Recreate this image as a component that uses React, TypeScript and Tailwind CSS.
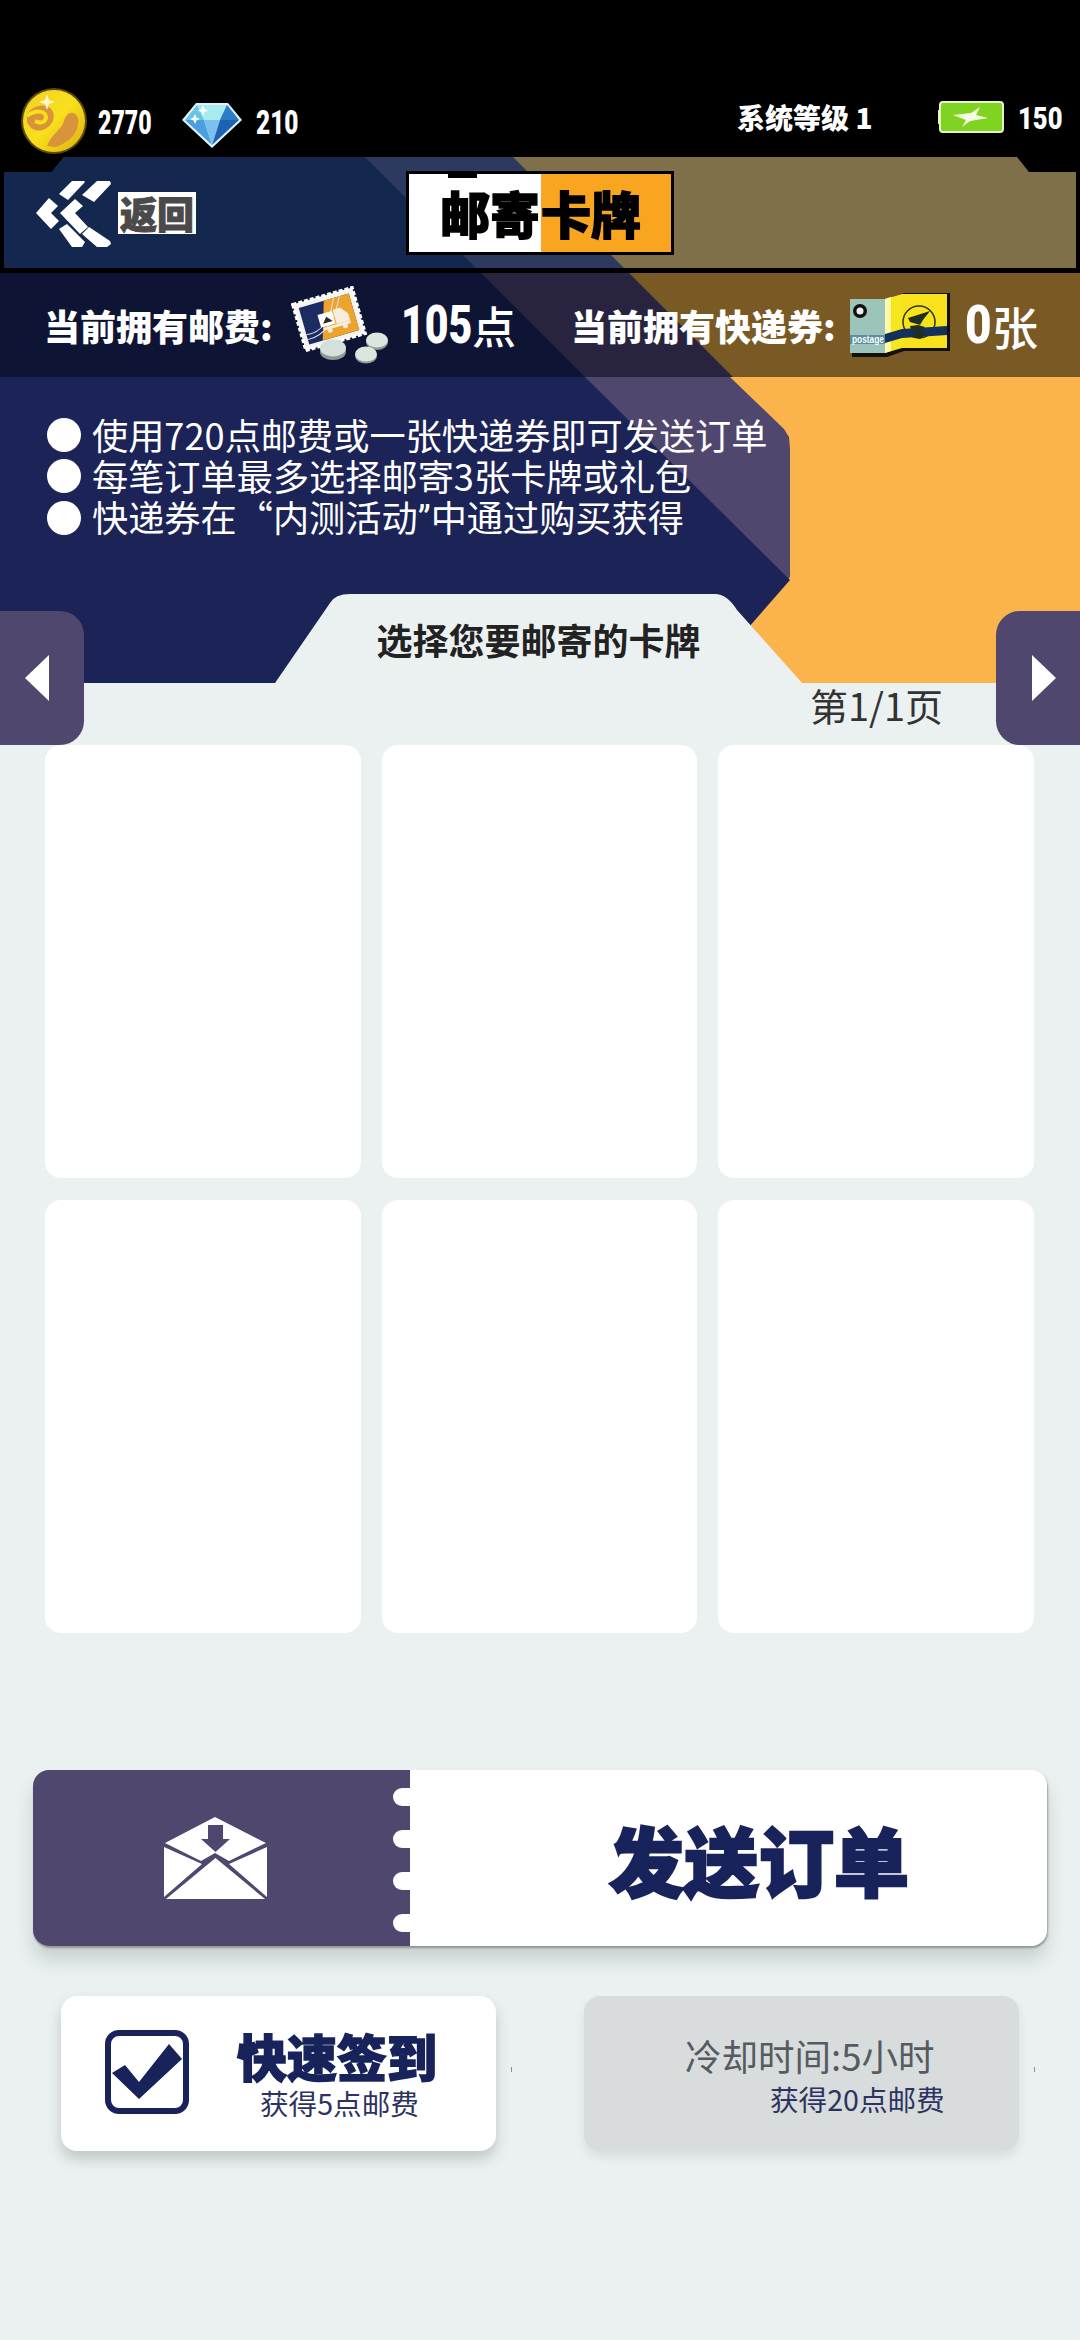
import type { ReactNode } from 'react'

const CARDS = [1, 2, 3, 4, 5, 6]

function Coin() {
  return (
    <svg viewBox="0 0 66 68" className="h-[68px] w-[66px] shrink-0">
      <defs>
        <linearGradient id="coinFill" x1="0" y1="0" x2="1" y2="1">
          <stop offset="0" stopColor="#f3cf28" />
          <stop offset="0.5" stopColor="#f8e01c" />
          <stop offset="1" stopColor="#dcae14" />
        </linearGradient>
      </defs>
      <circle cx="33" cy="34" r="33" fill="#5e4a10" />
      <circle cx="33" cy="34" r="31" fill="url(#coinFill)" />
      <path d="M6 27C13 17 26 16 31 23 35 30 32 38 24 42 16 46 9 42 6 35z" fill="#d9933a" />
      <path d="M6 29C14 23 24 23 25 30 25 35 20 37 14 34" fill="none" stroke="#f8e01c" strokeWidth="4" />
      <path d="M26 59C30 48 38 44 42 37 44 30 47 25 52 26 57 27 59 34 56 42 53 50 44 57 35 60z" fill="#d9933a" />
      <path d="M26 7l2 6 6 2-6 2-2 6-2-6-6-2 6-2z" fill="#fff8c8" />
    </svg>
  )
}

function Gem() {
  return (
    <svg viewBox="0 0 60 46" className="h-[46px] w-[60px] shrink-0">
      <path d="M14 1h32l14 17-30 28L0 18z" fill="#dff3fb" />
      <path d="M15 3h30l12 15H3z" fill="#66c6e8" />
      <path d="M15 3h30l-7 15H22z" fill="#a6ecee" />
      <path d="M3 18h19l8 25z" fill="#4b9fe0" />
      <path d="M22 18h16l-8 25z" fill="#7cc0ee" />
      <path d="M38 18h19L30 43z" fill="#1f62b4" />
      <path d="M45 3l12 15H38z" fill="#2d7cc6" />
      <path d="M21 3l1.500 4 4 1.500-4 1.500L21 14l-1.500-4-4-1.500 4-1.500zM13 12l1.500 3.500 3.500 1.500-3.500 1.500L13 22l-1.500-3.500L8 17l3.500-1.500z" fill="#ffffff" />
    </svg>
  )
}

function Battery() {
  return (
    <svg viewBox="0 0 66 32" className="h-[32px] w-[66px] shrink-0">
      <rect x="2" y="1" width="63" height="30" rx="3" fill="#7fd321" stroke="#e8f5c8" strokeWidth="2" />
      <rect x="0" y="9" width="3" height="14" fill="#e8f5c8" />
      <path d="M15 14L33 12 42 6 38 14 50 17 32 20 24 26 28 19z" fill="#f6fbe6" />
    </svg>
  )
}

function BackChevrons() {
  return (
    <svg viewBox="0 0 75 68" className="h-[68px] w-[75px] shrink-0" fill="#ffffff">
      <path d="M23 15L36 2H48L49 3 32 21z" />
      <path d="M46 16L61 2H74L75 5 58 23z" />
      <path d="M0 34L13 19 22 27 15 34 23 42 15 50z" />
      <path d="M24 34L39 20 47 27 39 34 52 48 44 55z" />
      <path d="M23 50L31 45 49 63 46 68H36z" />
      <path d="M46 55L53 48 74 62 75 65 71 68H61z" />
    </svg>
  )
}

function Stamp() {
  return (
    <svg viewBox="0 0 98 78" className="h-[78px] w-[98px] shrink-0">
      <g transform="rotate(-16 38 33)">
        <rect x="7" y="9" width="62" height="48" fill="#f4f4f0" stroke="#ffffff" strokeWidth="3" strokeDasharray="4 2" />
        <rect x="12" y="14" width="52" height="38" fill="#1c2c62" />
        <path d="M38 14h26v38H26z" fill="#eda32c" />
        <path d="M12 42c16 2 28-9 36-28M12 47c18 1 32-12 42-33" fill="none" stroke="#dbe4f4" strokeWidth="1" />
        <rect x="28" y="26" width="15" height="13" fill="#ffffff" />
        <path d="M31 36l5-6 5 6z" fill="#2a2a2a" />
        <path d="M44 25h8l6 8v7H44z" fill="#f7eedd" />
        <rect x="30" y="40" width="28" height="3" fill="#f7eedd" />
        <circle cx="36" cy="44" r="2.500" fill="#f7eedd" />
        <circle cx="52" cy="44" r="2.500" fill="#f7eedd" />
      </g>
      <ellipse cx="42" cy="66" rx="13" ry="8" fill="#8c9a92" />
      <ellipse cx="42" cy="62" rx="13" ry="8.500" fill="#d4e0da" />
      <ellipse cx="86" cy="56" rx="11" ry="8" fill="#8c9a92" />
      <ellipse cx="86" cy="54" rx="11" ry="7.500" fill="#dbe6e0" />
      <ellipse cx="75" cy="70" rx="11" ry="7.500" fill="#8c9a92" />
      <ellipse cx="75" cy="68" rx="11" ry="7.500" fill="#dbe6e0" />
    </svg>
  )
}

function Ticket() {
  return (
    <svg viewBox="0 0 102 66" className="h-[66px] w-[102px] shrink-0">
      <path d="M0 6h35L52 0h46v58H52L35 64H0z" fill="#111111" transform="translate(2 1)" />
      <path d="M0 7h35v54H0z" fill="#9cc4bb" />
      <path d="M35 7L52 2v54L35 61z" fill="#f5e61e" />
      <path d="M52 2h45v54H52z" fill="#f8e21c" />
      <path d="M35 7l6-2v54l-6 2z" fill="#fff9a8" />
      <circle cx="10" cy="19" r="7" fill="#101010" />
      <circle cx="10" cy="19" r="3.500" fill="#e8efe9" />
      <circle cx="69" cy="30" r="16" fill="none" stroke="#27331c" strokeWidth="1.500" />
      <path d="M35 42L52 37 97 34v9L52 46 35 51z" fill="#14305c" />
      <rect x="0" y="43" width="35" height="9" fill="#5a8f9b" />
      <path d="M58 26L80 19 73 28 70 33 60 30z" fill="#20301e" />
      <path d="M60 34l8-1 7 2-5 4 6 3-6 5-8-3 5-3-6-3z" fill="#20301e" />
      <text x="2" y="51" textLength="32" lengthAdjust="spacingAndGlyphs" fontFamily="'Liberation Sans', sans-serif" fontWeight="700" fontSize="11" fill="#ffffff">
        postage
      </text>
    </svg>
  )
}

function Envelope() {
  return (
    <svg viewBox="0 0 103 82" className="h-[82px] w-[103px]">
      <path d="M51 0L102 26 65 44 51 36 37 44 1 26z" fill="#ffffff" />
      <path d="M44 8h15v14h7L51.500 35 37 22h7z" fill="#50476f" />
      <path d="M0 30l38 17L0 80z" fill="#ffffff" />
      <path d="M103 30L65 47l38 33z" fill="#ffffff" />
      <path d="M51.500 41L101 82H2z" fill="#ffffff" />
    </svg>
  )
}

function CheckBox() {
  return (
    <svg viewBox="0 0 84 84" className="h-[84px] w-[84px] shrink-0">
      <rect x="3" y="3" width="78" height="78" rx="11" fill="none" stroke="#17235a" strokeWidth="6" />
      <path d="M7 43l13-8 14 17L64 14l13 15-43 40z" fill="#17235a" />
    </svg>
  )
}

function Num({ className, children }: { className: string; children: string }) {
  return (
    <span className={`inline-block origin-left font-['Roboto',sans-serif] font-black text-white ${className}`}>
      {children}
    </span>
  )
}

function Notice({ children }: { children: ReactNode }) {
  return (
    <div className="flex items-center">
      <span className="mr-[11px] h-[34px] w-[34px] shrink-0 rounded-full bg-white" />
      <span className="whitespace-pre">{children}</span>
    </div>
  )
}

export default function App() {
  return (
    <div className="relative flex h-[2340px] w-[1080px] flex-col overflow-hidden bg-[#ebf1f1] font-['Noto_Sans_CJK_SC',sans-serif]">
      {/* status bar */}
      <div className="flex h-[157px] shrink-0 justify-between bg-black">
        <div className="flex items-start pl-[21px] pt-[87px]">
          <Coin />
          <Num className="ml-[11px] mt-[17px] w-[72px] scale-x-[0.7] text-[33px] leading-[38px]">2770</Num>
          <div className="mt-[15px] pl-[12px]">
            <Gem />
          </div>
          <Num className="ml-[14px] mt-[17px] w-[60px] scale-x-[0.74] text-[33px] leading-[38px]">210</Num>
        </div>
        <div className="flex items-start pr-[20px] pt-[101px]">
          <span className="mt-[-3px] w-[201px] text-[28px] font-black leading-[38px] text-white">系统等级 1</span>
          <Battery />
          <Num className="ml-[14px] mt-[-2px] w-[42px] scale-x-[0.8] text-[32px] leading-[38px]">150</Num>
        </div>
      </div>

      {/* header */}
      <div className="h-[116px] shrink-0 bg-black">
        <div className="relative mx-[4px] h-[111px] bg-[#80704a] [clip-path:polygon(0_15px,48px_15px,60px_0,1013px_0,1025px_15px,100%_15px,100%_100%,0_100%)]">
          <div className="absolute inset-0 bg-[#2c3a60] [clip-path:polygon(0_0,509px_0,620px_111px,0_111px)]" />
          <div className="absolute inset-0 bg-[#14284f] [clip-path:polygon(0_0,361px_0,472px_111px,0_111px)]" />
          <div className="relative flex h-full items-start">
            <div className="ml-[32px] mt-[22px]">
              <BackChevrons />
            </div>
            <span className="ml-[7px] mt-[35px] flex h-[42px] w-[78px] items-center justify-center bg-white text-[37px] font-black leading-none text-[#4a4a4a] [-webkit-text-stroke:1px_#4a4a4a]">
              返回
            </span>
            <div className="relative ml-[210px] mt-[14px] flex h-[84px] w-[268px] border-[3px] border-black text-[50px] font-black leading-none text-black [-webkit-text-stroke:1.5px_#000000]">
              <div className="absolute left-[39px] top-0 h-[4px] w-[29px] bg-black" />
              <div className="flex w-[132px] items-center justify-end bg-white pb-[2px] pr-[1px]">邮寄</div>
              <div className="flex flex-1 items-center bg-[#f9a51f] pb-[2px]">卡牌</div>
            </div>
          </div>
        </div>
      </div>

      {/* balances */}
      <div className="relative h-[104px] shrink-0 bg-[#7a5a24]">
        <div className="absolute inset-0 bg-[#28243f] [clip-path:polygon(0_0,629px_0,733px_104px,0_104px)]" />
        <div className="absolute inset-0 bg-[#0e1433] [clip-path:polygon(0_0,481px_0,585px_104px,0_104px)]" />
        <div className="relative flex h-full items-center text-white">
          <span className="ml-[44px] w-[247px] text-[36px] font-black leading-none">当前拥有邮费:</span>
          <Stamp />
          <Num className="ml-[12px] w-[71px] scale-x-[0.76] text-[54px] leading-none">105</Num>
          <span className="w-[99px] text-[44px] font-medium leading-none">点</span>
          <span className="w-[279px] text-[36px] font-black leading-none">当前拥有快递券:</span>
          <Ticket />
          <Num className="ml-[13px] w-[27px] scale-x-[0.85] text-[54px] leading-none">0</Num>
          <span className="text-[46px] font-medium leading-none">张</span>
        </div>
      </div>

      {/* notice panel */}
      <div className="relative flex h-[306px] shrink-0 flex-col bg-[#fbb44c]">
        <div className="absolute inset-0 bg-[#50476f] [clip-path:polygon(0_0,730px_0,784px_52px,789px_60px,790px_72px,790px_200px,700px_306px,0_306px)]" />
        <div className="absolute inset-0 bg-[#1b2357] [clip-path:polygon(0_0,585px_0,790px_203px,700px_306px,0_306px)]" />
        <div className="relative flex flex-col pl-[47px] pt-[37px] text-[36.200px] leading-[41px] text-white">
          <Notice>使用720点邮费或一张快递券即可发送订单</Notice>
          <Notice>每笔订单最多选择邮寄3张卡牌或礼包</Notice>
          <Notice>
            快递券在“内测活动<span className="font-['Roboto',sans-serif]">”</span>中通过购买获得
          </Notice>
        </div>
        <div className="relative mt-auto ml-[275px] flex h-[89px] w-[527px] items-start justify-center bg-[#ebf1f1] pt-[22px] text-[36px] font-bold leading-[46px] text-[#222222] [clip-path:path('M0_89L55_9Q60_0_75_0L440_0Q452_0_462_16L527_89Z')]">
          选择您要邮寄的卡牌
        </div>
      </div>

      {/* page label */}
      <div className="flex h-[62px] shrink-0 justify-end pr-[137px] text-[38px] leading-[44px] text-[#333333]">
        第1/1页
      </div>

      {/* card slots */}
      <div className="grid shrink-0 grid-cols-3 gap-x-[21px] gap-y-[22px] pl-[45px] pr-[46px]">
        {CARDS.map((id) => (
          <div key={id} className="h-[433px] rounded-[16px] bg-white" />
        ))}
      </div>

      {/* send order */}
      <div className="ml-[33px] mt-[137px] flex h-[176px] w-[1014px] shrink-0 overflow-hidden rounded-[16px] shadow-[1px_2px_2px_rgba(90,90,90,0.5),0_14px_18px_rgba(100,110,110,0.25)]">
        <div className="flex w-[377px] bg-[#50476f]">
          <div className="flex flex-1 items-center justify-center pl-[6px] pr-[2px]">
            <Envelope />
          </div>
          <div className="flex w-[17px] flex-col gap-[24px] pt-[18px]">
            <div className="h-[18px] rounded-l-full bg-white" />
            <div className="h-[18px] rounded-l-full bg-white" />
            <div className="h-[18px] rounded-l-full bg-white" />
            <div className="h-[18px] rounded-l-full bg-white" />
          </div>
        </div>
        <div className="flex flex-1 items-center justify-end bg-white pr-[138px] text-[75px] font-black leading-none text-[#17235a] [-webkit-text-stroke:2.5px_#17235a]">
          发送订单
        </div>
      </div>

      {/* daily buttons */}
      <div className="ml-[61px] mt-[50px] flex shrink-0 items-start gap-[88px]">
        <div className="relative flex h-[155px] w-[435px] items-start rounded-[16px] bg-white pl-[44px] pt-[34px] shadow-[0_8px_14px_rgba(80,90,90,0.28)]">
          <CheckBox />
          <div className="flex flex-col">
            <span className="ml-[48px] text-[50px] font-black leading-[50px] text-[#17235a] [-webkit-text-stroke:1.5px_#17235a]">快速签到</span>
            <span className="ml-[71px] mt-[7px] text-[28.600px] leading-[32px] text-[#2d3360]">获得5点邮费</span>
          </div>
          <div className="absolute -right-[16px] top-[71px] h-[5px] w-px bg-[#8a9092]" />
        </div>
        <div className="relative flex h-[155px] w-[435px] flex-col rounded-[16px] bg-[#d8dcdd] pt-[36px] shadow-[0_6px_10px_rgba(80,90,90,0.12)]">
          <span className="ml-[101px] text-[36.500px] leading-[48px] text-[#555b60]">冷却时间:5小时</span>
          <span className="ml-[186px] mt-[-1px] text-[28.600px] leading-[40px] text-[#2d3360]">获得20点邮费</span>
          <div className="absolute -right-[16px] top-[71px] h-[5px] w-px bg-[#8a9092]" />
        </div>
      </div>

      {/* previous / next page */}
      <button className="absolute left-0 top-[611px] flex h-[134px] w-[84px] items-center rounded-r-[24px] bg-[#50476f] pl-[25px]">
        <span className="h-0 w-0 border-y-[23px] border-r-[24px] border-y-transparent border-r-white" />
      </button>
      <button className="absolute right-0 top-[611px] flex h-[134px] w-[84px] items-center rounded-l-[24px] bg-[#50476f] pl-[36px]">
        <span className="h-0 w-0 border-y-[23px] border-l-[24px] border-y-transparent border-l-white" />
      </button>
    </div>
  )
}
